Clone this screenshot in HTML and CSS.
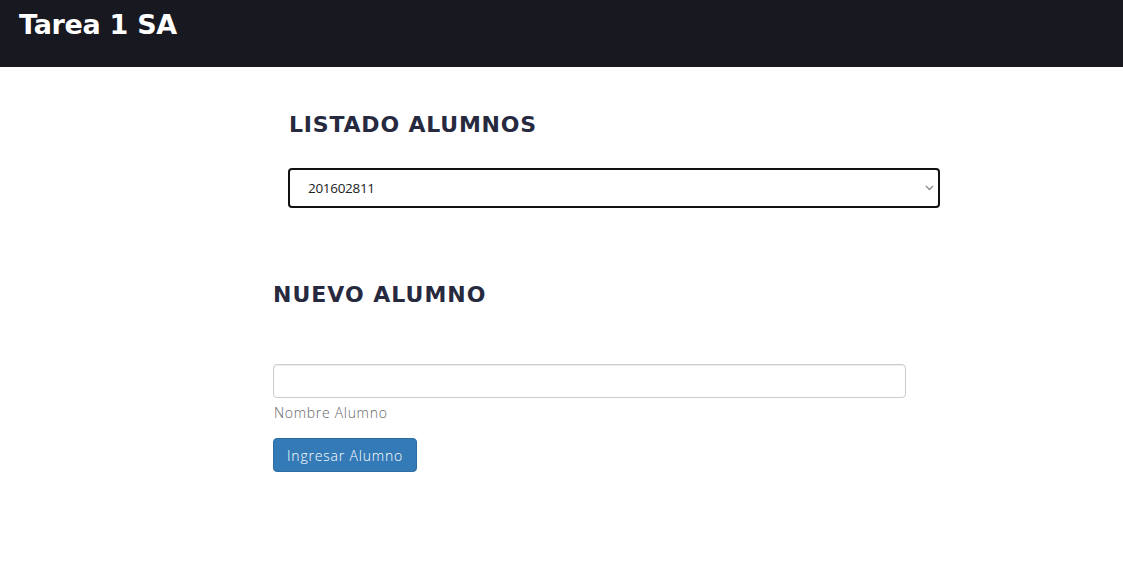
FILE: index.html
```html
<!DOCTYPE html>
<html lang="es">
<head>
<meta charset="utf-8">
<title>Tarea 1 SA</title>
<link rel="stylesheet" href="styles.css">
</head>
<body>
<header class="topbar">
  <h1 class="brand">Tarea 1 SA</h1>
</header>
<main class="page">
  <section class="list-section">
    <h2 class="title">LISTADO ALUMNOS</h2>
    <div class="select-wrap">
      <select class="student-select">
        <option>201602811</option>
      </select>
      <svg class="chevron" width="9" height="6" viewBox="0 0 9 6"><path d="M1 1 L4.5 4.5 L8 1" fill="none" stroke="#8a8a8a" stroke-width="1.3"/></svg>
    </div>
  </section>
  <section class="new-section">
    <h2 class="title">NUEVO ALUMNO</h2>
    <form class="new-form">
      <input class="text-input" type="text">
      <span class="help">Nombre Alumno</span>
      <button class="btn" type="button">Ingresar Alumno</button>
    </form>
  </section>
</main>
</body>
</html>
```
FILE: styles.css
```css
* { box-sizing: border-box; }
html, body { margin: 0; padding: 0; background: #fff; }
body { font-family: "Open Sans", "Lato", sans-serif; }

.topbar {
  height: 67px;
  background: #171820;
  padding: 8px 19px 0;
}
.brand {
  margin: 0;
  color: #fff;
  font-family: "DejaVu Sans", sans-serif;
  font-weight: bold;
  font-size: 27px;
  line-height: 34px;
  letter-spacing: -0.3px;
}

.page { display: flex; flex-direction: column; }

.list-section {
  margin-left: 288px;
  width: 652px;
  padding-top: 44px;
}
.title {
  margin: 0;
  color: #272a3f;
  font-family: "DejaVu Sans", sans-serif;
  font-weight: bold;
  font-size: 22px;
  line-height: 28px;
  letter-spacing: 1px;
}
.list-section .title { margin-left: 1px; letter-spacing: 0.8px; }

.select-wrap {
  position: relative;
  margin-top: 29px;
  width: 652px;
}
.student-select {
  display: block;
  width: 652px;
  height: 40px;
  border: 2px solid #111;
  border-radius: 4px;
  background: #fff;
  padding: 0 18px;
  font-family: "Open Sans", sans-serif;
  font-size: 13.5px;
  font-weight: 400;
  letter-spacing: -0.3px;
  color: #222;
  -webkit-appearance: none;
  appearance: none;
}
.chevron {
  position: absolute;
  right: 6px;
  top: 17px;
  pointer-events: none;
}

.new-section {
  margin-left: 273px;
  width: 633px;
  padding-top: 73px;
}
.new-form {
  display: flex;
  flex-direction: column;
  align-items: flex-start;
  margin-top: 55px;
}
.text-input {
  width: 633px;
  height: 34px;
  border: 1px solid #ccc;
  border-radius: 4px;
  box-shadow: inset 0 1px 1px rgba(0,0,0,0.075);
  font-size: 14px;
  padding: 6px 12px;
}
.help {
  margin-top: 5px;
  margin-left: 1px;
  color: #666;
  font-size: 14px;
  font-weight: 300;
  letter-spacing: 0.7px;
  line-height: 20px;
}
.btn {
  margin-top: 15px;
  height: 34px;
  width: 144px;
  background: #337ab7;
  border: 1px solid #2e6da4;
  border-radius: 4px;
  color: #fff;
  font-family: "Open Sans", sans-serif;
  font-size: 14px;
  font-weight: 300;
  letter-spacing: 0.8px;
  padding: 0;
}
```
